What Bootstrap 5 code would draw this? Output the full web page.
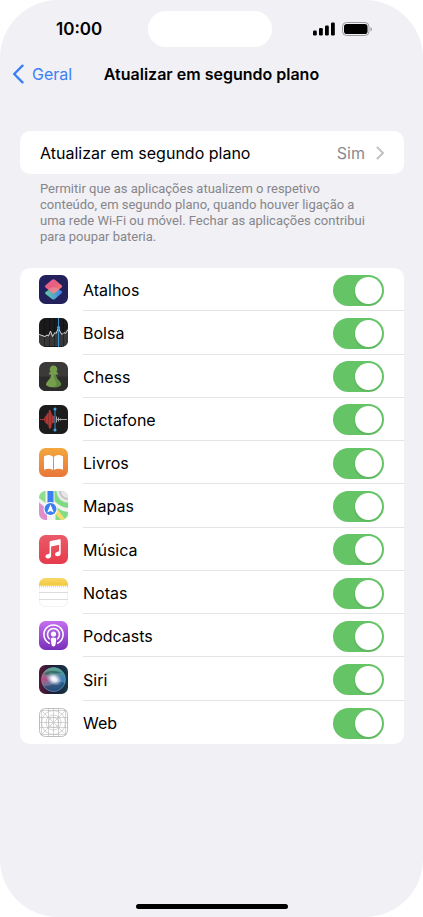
<!DOCTYPE html>
<html lang="pt">
<head>
<meta charset="utf-8">
<meta name="viewport" content="width=device-width, initial-scale=1">
<title>Atualizar em segundo plano</title>
<link href="https://cdn.jsdelivr.net/npm/bootstrap@5.3.0/dist/css/bootstrap.min.css" rel="stylesheet">
<style>
body { font-family: Inter, "Liberation Sans", sans-serif; font-size: 16px; line-height: 24px; color: #000; background: #fff; }
.screen { background: #f1f0f5; border-radius: 58px; }
.status-bar { height: 58px; font-size: 17px; display: grid; grid-template-columns: 1fr auto 1fr; padding-right: 3px; }
.clock { padding-left: 56px; }
.signals { margin-right: 47px; }
.island { width: 124px; height: 36px; }
.title-bar { height: 32px; display: grid; grid-template-columns: 1fr auto 1fr; padding: 0 12px; }
.back-link { color: #3b7ff6; gap: 8px; }
.content { padding: 25px 19px 0 20px; }
.panel { border-radius: 10px; }
.open-row { height: 43px; padding: 0 19px 0 20px; }
.muted-text { color: #8a8a8e; padding-right: 10px; }
.hint { font-family: Roboto, "Liberation Sans", sans-serif; font-size: 13px; line-height: 16px; color: #86868b; padding: 7px 28px 0 20px; margin-bottom: 23px; }
.app-list { display: grid; grid-auto-rows: 1fr; min-height: 476px; padding-left: 19px; }
.app-icon { width: 29px; height: 29px; }
.app-row { gap: 15px; }
.app-body { padding: 2px 20px 0 0; border-bottom: 1px solid #e4e4e6; }
li:last-child .app-body { border-bottom: 0; }
.form-check-input.toggle { width: 51px; height: 31px; margin: 0; border: 0; border-radius: 16px; background-color: #e9e9ea; background-size: 31px 31px; background-repeat: no-repeat; background-position: left center;
  background-image: url("data:image/svg+xml,%3Csvg xmlns='http://www.w3.org/2000/svg' viewBox='0 0 31 31'%3E%3Ccircle cx='15' cy='17' r='14' fill='%23000' opacity='.06'/%3E%3Ccircle cx='15.5' cy='15.5' r='13.5' fill='%23fff'/%3E%3C/svg%3E"); }
.form-check-input.toggle:checked { background-color: #65c466; background-position: right center;
  background-image: url("data:image/svg+xml,%3Csvg xmlns='http://www.w3.org/2000/svg' viewBox='0 0 31 31'%3E%3Ccircle cx='15' cy='17' r='14' fill='%23000' opacity='.06'/%3E%3Ccircle cx='15.5' cy='15.5' r='13.5' fill='%23fff'/%3E%3C/svg%3E"); }
.home-bar { width: 152px; height: 5px; margin-bottom: 8px; }
</style>
<script src="https://cdn.jsdelivr.net/npm/bootstrap@5.3.0/dist/js/bootstrap.bundle.min.js"></script>
</head>
<body>
<svg width="0" height="0" class="position-absolute" aria-hidden="true">
  <defs>
    <clipPath id="tile"><rect width="29" height="29" rx="6.5"/></clipPath>
    <linearGradient id="gPink" x1="0" y1="0" x2="1" y2="1"><stop stop-color="#e95a9c"/><stop offset=".5" stop-color="#e8607c"/><stop offset="1" stop-color="#ef8f6d"/></linearGradient>
    <linearGradient id="gTeal" x1="0" y1="0" x2="1" y2="0"><stop stop-color="#5fc9a4"/><stop offset=".5" stop-color="#55aac8"/><stop offset="1" stop-color="#3c7cf0"/></linearGradient>
    <linearGradient id="gBook" x2="0" y2="1"><stop stop-color="#f3a73e"/><stop offset="1" stop-color="#e9763a"/></linearGradient>
    <linearGradient id="gMusic" x2="0" y2="1"><stop stop-color="#ea5a68"/><stop offset="1" stop-color="#e63b4c"/></linearGradient>
    <linearGradient id="gNote" x2="0" y2="1"><stop stop-color="#f8d865"/><stop offset="1" stop-color="#f1c93f"/></linearGradient>
    <linearGradient id="gPod" x2="0" y2="1"><stop stop-color="#c46ff0"/><stop offset="1" stop-color="#7a2fb9"/></linearGradient>
    <linearGradient id="gSiri" x2="1" y2="0"><stop stop-color="#5a1838"/><stop offset=".45" stop-color="#1c1c38"/><stop offset="1" stop-color="#153848"/></linearGradient>
    <linearGradient id="gOrb" x1="0" y1=".3" x2="1" y2=".6"><stop stop-color="#d83c78"/><stop offset=".45" stop-color="#7c6a9c"/><stop offset="1" stop-color="#2c86c8"/></linearGradient>
    <radialGradient id="gGlow"><stop stop-color="#fff"/><stop offset=".35" stop-color="#fff" stop-opacity=".85"/><stop offset="1" stop-color="#c8e0ff" stop-opacity="0"/></radialGradient>
    <linearGradient id="gSea" x2="0" y2="1"><stop stop-color="#48b890" stop-opacity=".9"/><stop offset=".5" stop-color="#48b890" stop-opacity="0"/><stop offset="1" stop-color="#205898" stop-opacity=".9"/></linearGradient>
  </defs>
</svg>
<div class="screen min-vh-100 d-flex flex-column">
  <header>
    <div class="status-bar align-items-center">
      <span class="clock fw-semibold">10:00</span>
      <div class="island bg-white rounded-pill"></div>
      <svg class="signals ms-auto" width="60" height="14" viewBox="0 0 60 14" role="img" aria-label="Rede e bateria">
        <rect x="0" y="8.5" width="3.8" height="5" rx="1.2"/><rect x="6" y="6" width="3.8" height="7.5" rx="1.2"/><rect x="12" y="3.5" width="3.8" height="10" rx="1.2"/><rect x="18" y=".5" width="3.8" height="13" rx="1.2"/>
        <rect x="29.500" y=".5" width="26.500" height="13" rx="4" fill="none" stroke="#9a9a9f"/><rect x="31" y="2" width="23.500" height="10" rx="2.800"/><path d="M57.500 5v4.500q1.500-.7 1.500-2.200t-1.500-2.300z" fill="#9a9a9f"/>
      </svg>
    </div>
    <nav class="title-bar align-items-center">
      <a href="#" class="back-link d-flex align-items-center text-decoration-none"><svg width="12" height="20" viewBox="0 0 12 20" fill="none" stroke="currentColor" stroke-width="2.400" stroke-linecap="round" stroke-linejoin="round" aria-hidden="true"><path d="M10.500 1.700 2.200 10l8.300 8.300"/></svg>Geral</a>
      <h1 class="fs-6 lh-base fw-semibold m-0">Atualizar em segundo plano</h1>
      <span></span>
    </nav>
  </header>
  <main class="content flex-grow-1">
    <a href="#" class="panel open-row bg-white d-flex align-items-center text-decoration-none text-black mt-3">
      <span class="flex-grow-1">Atualizar em segundo plano</span>
      <span class="muted-text">Sim</span>
      <svg width="10" height="14" viewBox="0 0 10 14" fill="none" stroke="#c2c2c5" stroke-width="2" stroke-linecap="round" stroke-linejoin="round" aria-hidden="true"><path d="m2.500 1.500 5.500 5.500-5.500 5.500"/></svg>
    </a>
    <p class="hint">Permitir que as aplicações atualizem o respetivo conteúdo, em segundo plano, quando houver ligação a uma rede Wi-Fi ou móvel. Fechar as aplicações contribui para poupar bateria.</p>
    <ul class="app-list panel bg-white list-unstyled mb-0">
      <li class="app-row d-flex align-items-center">
        <svg class="app-icon flex-shrink-0" viewBox="0 0 29 29" aria-hidden="true"><rect width="29" height="29" rx="6.500" fill="#22215c"/><path d="M6.500 17 14.500 12l8 4q1.300 1 0 2.200L16 24q-1.500 1.200-3 0l-6.200-4.800q-1.200-1-.3-2.200z" fill="url(#gTeal)"/><path d="M13 4.800q1.500-1.200 3 0l6.500 5.400q1.200 1 0 2.200L16 17.800q-1.500 1.200-3 0l-6.400-5.200q-1.200-1.200 0-2.400z" fill="url(#gPink)"/><path d="m8.500 14.200 4.500 3.600q1.500 1.200 3 0l4.500-3.600-6-2.300z" fill="#e9a5b4" opacity=".4"/></svg>
        <div class="app-body d-flex align-items-center justify-content-between flex-grow-1 align-self-stretch"><label for="s1">Atalhos</label><div class="form-check form-switch p-0 m-0 d-flex"><input class="form-check-input toggle" type="checkbox" role="switch" id="s1" checked></div></div>
      </li>
      <li class="app-row d-flex align-items-center">
        <svg class="app-icon flex-shrink-0" viewBox="0 0 29 29" aria-hidden="true"><g clip-path="url(#tile)"><rect width="29" height="29" fill="#1b1b1d"/><path d="M0 18.500 3 17l3 1 2-1 2 1 2-4.500 2 4.500 2-3 2-1.500 1.500-4.500 2 4.500 1.500 3 2-1.500 2-3 2-2v18H0z" fill="#38383a"/><path d="M5.500 0v29M10.500 0v29M15.500 0v29M24.500 0v29" stroke="#000" stroke-opacity=".35"/><path d="m0 16.500 3 1 3 1 2-1.500 1.500 1 2-5 2 5.500 2.500-4 1 1 2.500-5.500 1.500 3.500 2 3 2-2 1.500 1 2.500-4" fill="none" stroke="#d8d8d8" stroke-width="1"/><path d="M19.500 0v29" stroke="#3c91d0"/><circle cx="19.500" cy="9.500" r="1.500" fill="#4ba7ea"/></g></svg>
        <div class="app-body d-flex align-items-center justify-content-between flex-grow-1 align-self-stretch"><label for="s2">Bolsa</label><div class="form-check form-switch p-0 m-0 d-flex"><input class="form-check-input toggle" type="checkbox" role="switch" id="s2" checked></div></div>
      </li>
      <li class="app-row d-flex align-items-center">
        <svg class="app-icon flex-shrink-0" viewBox="0 0 29 29" aria-hidden="true"><g clip-path="url(#tile)"><rect width="29" height="29" fill="#3b3a38"/><path d="M0 14.500h29V29H0z" fill="#2d2c2a"/></g><path d="M14.500 3.500a3.900 3.900 0 0 1 2.900 6.400L19 11v1.500h-2.200q.4 4.300 3 6 2.200 2 2.200 4.500-2 2.300-7.500 2.300T7 23q0-2.500 2.200-4.500 2.600-1.700 3-6H10V11l1.600-1.100a3.900 3.900 0 0 1 2.900-6.400z" fill="#759f4c"/><path d="M14.500 12.500h2.300q.4 4.300 3 6 2.200 2 2.200 4.500-2 2.300-7.500 2.300 4-2 2.500-5t-2.500-7.800z" fill="#608a42"/></svg>
        <div class="app-body d-flex align-items-center justify-content-between flex-grow-1 align-self-stretch"><label for="s3">Chess</label><div class="form-check form-switch p-0 m-0 d-flex"><input class="form-check-input toggle" type="checkbox" role="switch" id="s3" checked></div></div>
      </li>
      <li class="app-row d-flex align-items-center">
        <svg class="app-icon flex-shrink-0" viewBox="0 0 29 29" aria-hidden="true"><rect width="29" height="29" rx="6.500" fill="#1c1c1d"/><path d="M1 14h4l1-3 1.500-.5 1-2.500h1l.5-3h1.500l.5 3 1 1 1 2h1.500v7H13.500l-1 2-.5 3.500h-2l-.5-3-1-1L7 18l-1-.5-1-2.500H1z" fill="#b23836"/><path d="M6.500 10v9M9.500 8v13M12.500 7v15" stroke="#6a2827" stroke-width=".5"/><path d="M17.500 11.500v6M19.500 12.500v4M21.500 13.500v2M17 14.500h11" stroke="#aaa"/><path d="M16 4v21" stroke="#3b8ecb"/><circle cx="16" cy="4" r="1.500" fill="#4aa5ec"/><circle cx="16" cy="25" r="1.500" fill="#4aa5ec"/></svg>
        <div class="app-body d-flex align-items-center justify-content-between flex-grow-1 align-self-stretch"><label for="s4">Dictafone</label><div class="form-check form-switch p-0 m-0 d-flex"><input class="form-check-input toggle" type="checkbox" role="switch" id="s4" checked></div></div>
      </li>
      <li class="app-row d-flex align-items-center">
        <svg class="app-icon flex-shrink-0" viewBox="0 0 29 29" aria-hidden="true"><rect width="29" height="29" rx="6.500" fill="url(#gBook)"/><path d="M14 8.800Q12.300 7 9.500 7 6.500 7 5 8.500v13.300q2-1 4.500-1 2.800 0 4.500 1.300zM15 8.800Q16.700 7 19.500 7q3 0 4.500 1.500v13.300q-2-1-4.500-1-2.800 0-4.500 1.300z" fill="#fff"/></svg>
        <div class="app-body d-flex align-items-center justify-content-between flex-grow-1 align-self-stretch"><label for="s5">Livros</label><div class="form-check form-switch p-0 m-0 d-flex"><input class="form-check-input toggle" type="checkbox" role="switch" id="s5" checked></div></div>
      </li>
      <li class="app-row d-flex align-items-center">
        <svg class="app-icon flex-shrink-0" viewBox="0 0 29 29" aria-hidden="true"><g clip-path="url(#tile)"><rect width="29" height="29" fill="#f3f2ee"/><path d="M0 0h6.500v12L0 7z" fill="#8be08e"/><path d="M15.500 0H29v17q-8-1-13.500-7z" fill="#7edb83"/><circle cx="29" cy="0" r="11.500" fill="#e8e8e6"/><circle cx="29" cy="0" r="8" fill="none" stroke="#c4c4c6" stroke-width="2"/><path d="M0 11.500 8 18v11H0z" fill="#dd8fcb"/><path d="M16.500 15q5 5.500 12.500 6v8H16.500z" fill="#82dc86"/><path d="m15 14 12 15h-5L14 20z" fill="#f6dc6e"/><path d="M8.500 0h6v14h-6z" fill="#3c7ff2"/><circle cx="11.500" cy="18" r="7" fill="#fff"/><circle cx="11.500" cy="18" r="6" fill="#3c7ff2"/><path d="m11.500 13.500 3.300 8-3.300-1.500-3.300 1.500z" fill="#fff"/></g></svg>
        <div class="app-body d-flex align-items-center justify-content-between flex-grow-1 align-self-stretch"><label for="s6">Mapas</label><div class="form-check form-switch p-0 m-0 d-flex"><input class="form-check-input toggle" type="checkbox" role="switch" id="s6" checked></div></div>
      </li>
      <li class="app-row d-flex align-items-center">
        <svg class="app-icon flex-shrink-0" viewBox="0 0 29 29" aria-hidden="true"><rect width="29" height="29" rx="6.500" fill="url(#gMusic)"/><path d="M20.700 4.300q1-.2 1 .8v13q0 3.200-3.200 3.200-2.500 0-2.500-2 0-1.800 2.200-2.300 1.900-.3 1.900-1.500V9.800l-8 1.700v8.800q0 3.200-3.200 3.200-2.500 0-2.500-2 0-1.800 2.200-2.300 2-.3 2-1.500V7.200q0-.9 1-1.100z" fill="#fff"/></svg>
        <div class="app-body d-flex align-items-center justify-content-between flex-grow-1 align-self-stretch"><label for="s7">Música</label><div class="form-check form-switch p-0 m-0 d-flex"><input class="form-check-input toggle" type="checkbox" role="switch" id="s7" checked></div></div>
      </li>
      <li class="app-row d-flex align-items-center">
        <svg class="app-icon flex-shrink-0" viewBox="0 0 29 29" aria-hidden="true"><rect x=".25" y=".25" width="28.500" height="28.500" rx="6.300" fill="#fff" stroke="#e2e2e2" stroke-width=".5"/><g clip-path="url(#tile)"><path d="M0 0h29v7.800H0z" fill="url(#gNote)"/><path d="M0 14.500h29M0 21.500h29" stroke="#dcdcdc"/><path d="M0 8.800h29" stroke="#c9c6bc" stroke-dasharray="1 1"/></g></svg>
        <div class="app-body d-flex align-items-center justify-content-between flex-grow-1 align-self-stretch"><label for="s8">Notas</label><div class="form-check form-switch p-0 m-0 d-flex"><input class="form-check-input toggle" type="checkbox" role="switch" id="s8" checked></div></div>
      </li>
      <li class="app-row d-flex align-items-center">
        <svg class="app-icon flex-shrink-0" viewBox="0 0 29 29" aria-hidden="true"><rect width="29" height="29" rx="6.500" fill="url(#gPod)"/><g fill="none" stroke="#fff" stroke-width="1.600" stroke-linecap="round"><path d="M10.300 22.200a9.600 9.600 0 1 1 8.400 0"/><path d="M10.300 17.800a6 6 0 1 1 8.400 0"/></g><circle cx="14.500" cy="13" r="2.600" fill="#fff"/><path d="M14.500 16.500q3 0 2.700 2.200l-.7 5q-.2 1.700-2 1.700t-2-1.700l-.7-5q-.3-2.200 2.700-2.200z" fill="#fff"/></svg>
        <div class="app-body d-flex align-items-center justify-content-between flex-grow-1 align-self-stretch"><label for="s9">Podcasts</label><div class="form-check form-switch p-0 m-0 d-flex"><input class="form-check-input toggle" type="checkbox" role="switch" id="s9" checked></div></div>
      </li>
      <li class="app-row d-flex align-items-center">
        <svg class="app-icon flex-shrink-0" viewBox="0 0 29 29" aria-hidden="true"><rect width="29" height="29" rx="6.500" fill="url(#gSiri)"/><circle cx="14.500" cy="14.500" r="12" fill="url(#gOrb)"/><circle cx="14.500" cy="14.500" r="12" fill="url(#gSea)"/><path d="M5 21q8 0 12-4 5-1 9 1-2 8-11 8.500Q8 26 5 21z" fill="#183060" opacity=".5"/><path d="M4 9q8-6 19-1-8 0-11 4-4-3-8-3z" fill="#205a50" opacity=".6"/><circle cx="14.500" cy="14.500" r="12" fill="none" stroke="#7a9aa8" stroke-opacity=".7" stroke-width=".8"/><ellipse cx="15" cy="14" rx="8.500" ry="6" fill="url(#gGlow)" transform="rotate(30 15 14)"/></svg>
        <div class="app-body d-flex align-items-center justify-content-between flex-grow-1 align-self-stretch"><label for="s10">Siri</label><div class="form-check form-switch p-0 m-0 d-flex"><input class="form-check-input toggle" type="checkbox" role="switch" id="s10" checked></div></div>
      </li>
      <li class="app-row d-flex align-items-center">
        <svg class="app-icon flex-shrink-0" viewBox="0 0 29 29" aria-hidden="true"><rect x=".5" y=".5" width="28" height="28" rx="6" fill="#fff" stroke="#bdbdbd"/><g clip-path="url(#tile)" fill="none" stroke="#b8b8b8" stroke-width=".6"><path d="M2.500 0v29M9.500 0v29M14.500 0v29M19.500 0v29M26.500 0v29M0 2.500h29M0 9.500h29M0 14.500h29M0 19.500h29M0 26.500h29M0 0l29 29M29 0 0 29"/><circle cx="14.500" cy="14.500" r="12"/><circle cx="14.500" cy="14.500" r="7.500"/><circle cx="14.500" cy="14.500" r="5"/></g></svg>
        <div class="app-body d-flex align-items-center justify-content-between flex-grow-1 align-self-stretch"><label for="s11">Web</label><div class="form-check form-switch p-0 m-0 d-flex"><input class="form-check-input toggle" type="checkbox" role="switch" id="s11" checked></div></div>
      </li>
    </ul>
  </main>
  <footer class="d-flex justify-content-center"><div class="home-bar bg-black rounded-pill"></div></footer>
</div>
</body>
</html>
